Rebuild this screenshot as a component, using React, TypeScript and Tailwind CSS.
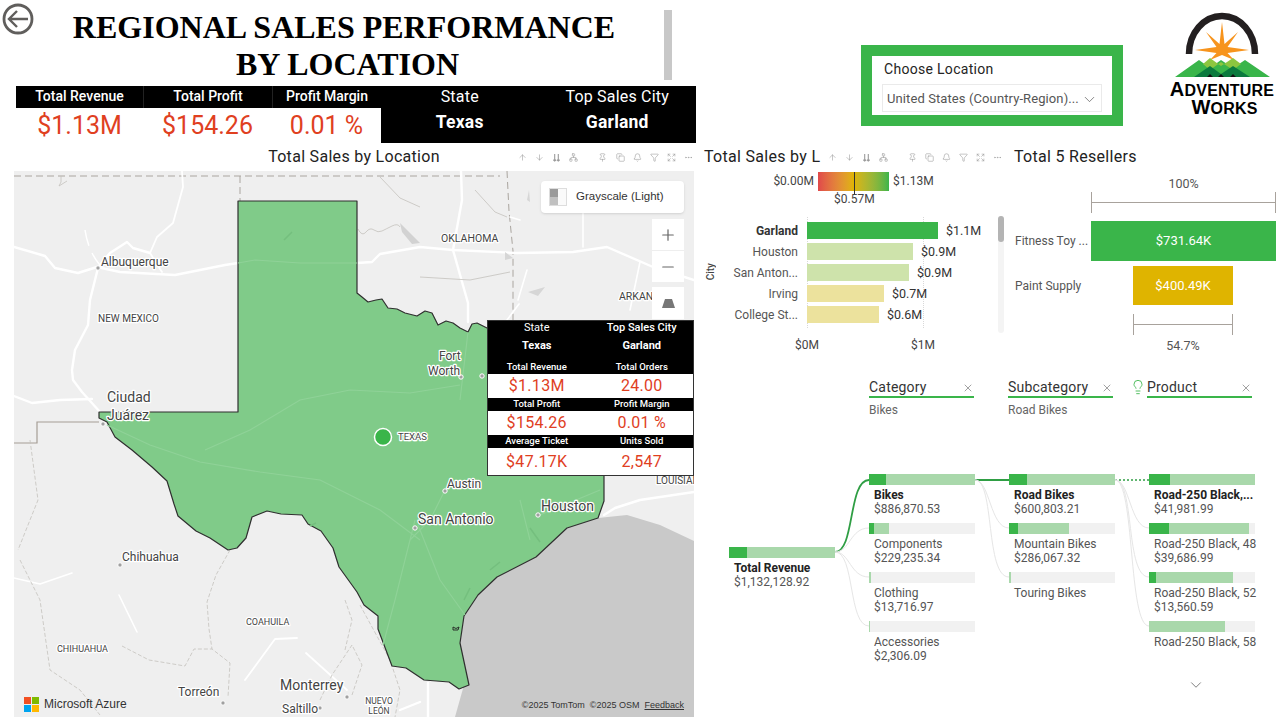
import React from "react";
import { ArrowUp, ArrowDown, ChevronDown, Pin, Copy, Bell, Filter, Expand, MoreHorizontal, Plus, Minus, X, Lightbulb, Network } from "lucide-react";

const din = "font-['Roboto','Noto_Sans',sans-serif]";

function Toolbar({ className }: { className: string }) {
  const c = "w-[9px] h-[9px] text-[#9a9a9a]";
  return (
    <div className={"flex items-center justify-between " + className}>
      <ArrowUp className={c} strokeWidth={1.5} />
      <ArrowDown className={c} strokeWidth={1.5} />
      <svg viewBox="0 0 10 10" className={c} fill="none" stroke="currentColor" strokeWidth="1.2"><path d="M3 1v8M1.5 7.5 3 9l1.5-1.5M7 1v8M5.5 7.5 7 9l1.5-1.5" /></svg>
      <Network className={c} strokeWidth={1.5} />
      <span className="w-[4px]" />
      <Pin className={c} strokeWidth={1.5} />
      <Copy className={c} strokeWidth={1.5} />
      <Bell className={c} strokeWidth={1.5} />
      <Filter className={c} strokeWidth={1.5} />
      <Expand className={c} strokeWidth={1.5} />
      <MoreHorizontal className={c} strokeWidth={1.5} />
    </div>
  );
}

const texas =
  "238,201 357,201 357,293 362,297 368,302 376,300 382,299 388,308 397,309 405,313 417,316 425,311 432,313 438,325 446,321 453,323 460,328 468,332 472,324 477,323 487,328 520,335 560,340 590,347 603,358 604,400 604,477 604,501 598,518 567,528 536,557 497,577 478,595 464,616 460,643 469,685 459,689 449,682 424,680 406,668 392,666 378,629 378,616 364,605 357,592 339,567 333,548 321,531 308,524 302,515 281,514 267,511 252,517 246,538 237,548 228,550 210,538 196,531 178,516 174,504 167,481 152,467 132,450 115,437 107,422 99,418 99,412 238,412";

const gulf = "455,717 464,685 460,643 464,616 478,595 497,577 536,557 567,528 598,518 627,515 660,525 694,541 694,717";

function Label({ x, y, t, s, a = "start", w = 400 }: { x: number; y: number; t: string; s: number; a?: "start" | "middle"; w?: number }) {
  return (
    <text x={x} y={y} fontSize={s} textAnchor={a} fontWeight={w} fill="#444" stroke="#fff" strokeWidth="2.5" strokeLinejoin="round" className="[paint-order:stroke] font-['Roboto',sans-serif]">
      {t}
    </text>
  );
}

function Dot({ x, y }: { x: number; y: number }) {
  return <circle cx={x} cy={y} r="2.2" fill="#a0a0a0" stroke="#fff" strokeWidth="1" />;
}

function MapArt() {
  const road = { fill: "none", stroke: "#fff", strokeWidth: 2.4, strokeLinejoin: "round" as const, strokeLinecap: "round" as const };
  const thin = { fill: "none", stroke: "#c4c1bd", strokeWidth: 0.8 };
  const dash = { fill: "none", stroke: "#aaa59f", strokeWidth: 1, strokeDasharray: "7 4" };
  return (
    <svg viewBox="14 171 680 546" className="w-full h-full block">
      <rect x="14" y="171" width="680" height="546" fill="#efefef" />
      <polygon points={gulf} fill="#c9c9c9" />
      <path d="M14 176H500" {...dash} />
      <path d="M240 176V201" {...dash} />
      <path d="M61 176v6l-2 4 8-5" {...thin} />
      <path d="M507 171l2 40 4 40v70" {...dash} />
      <path d="M14 443H37V422H99" fill="none" stroke="#a59d95" strokeWidth="1.2" />
      <path d="M14 247 45 256 55 268 78 273 97 267 120 272 175 275 225 265 238 263" {...road} />
      <path d="M357 263 372 262 380 254 420 247 453 250 517 253 573 252 607 247 653 267 694 280" {...road} />
      <path d="M461 171 462 200 453 250 468 303 468 322" {...road} />
      <path d="M98 268 90 300 88 325 75 350 72 370 73 380 82 392 100 412" {...road} />
      <path d="M182 171 183 187 173 223 157 237 150 253 162 272" {...road} strokeWidth={1.8} />
      <path d="M98 267 110 253 127 242 133 248 150 253" {...road} />
      <path d="M14 396 32 403 60 400 92 399" {...road} />
      <path d="M85 230q3 20 14 34" fill="none" stroke="#fff" strokeWidth="1.5" strokeDasharray="16 8" />
      <path d="M583 213V247M510 217 520 220M527 270 518 300M507 320l12-16" {...road} strokeWidth={1.6} />
      <path d="M640 262 630 310" {...road} strokeWidth={1.6} />
      <path d="M604 515 615 508 640 500 694 492" {...road} />
      <path d="M14 578 40 584 72 573" {...road} strokeWidth={1.6} />
      <path d="M119 595 137 632" {...road} strokeWidth={1.6} />
      <path d="M245 680 275 639 297 638" {...road} strokeWidth={1.8} />
      <path d="M306 653 347 690" {...road} strokeWidth={1.8} />
      <path d="M428 683V717" {...road} />
      <path d="M400 710l20-8" {...road} />
      <path d="M230 550 216 575 207 602 209 629 212 649 230 663 228 697" {...thin} strokeDasharray="4 2" />
      <path d="M122 646 149 660 185 666 194 649 212 649" {...thin} strokeDasharray="4 2" />
      <path d="M20 560 40 600 50 670 80 690 100 715M30 440l8 60 -20 50" {...thin} strokeDasharray="4 2" />
      <path d="M345 650 352 620 345 600M320 700l12-25 20-30 10 20-10 30" {...thin} strokeDasharray="4 2" />
      <path d="M360 605 390 660 400 690 395 717" {...thin} strokeDasharray="4 2" />
      <path d="M380 177 400 198 420 207M475 190l20 22 12 5M358 229q4 8 8 3t8-2 8 1 10-5 8 1M420 277 470 280 510 272" {...thin} />
      <path d="M400 223 420 243 412 244 402 232z" fill="#d2d2d2" />
      <path d="M528 292 545 287 538 296z M505 252l8 6-8 2z M527 200l2-10 1 12z" fill="#d6d6d6" />
      <polygon points={texas} fill="#80cb89" stroke="#2f2f2f" strokeWidth="1.2" strokeLinejoin="round" />
      <path d="M238 263 255 260 300 263 357 263M205 450 250 430 300 400 350 390 410 393 460 385M107 425 150 445 200 462 260 472 320 480 380 510 420 540M415 520 395 600 383 645M418 525 440 580 465 615M445 490 430 520 410 540M540 515 600 490M520 500l10 40M460 400 468 332" fill="none" stroke="#8fd298" strokeWidth="1.1" />
      <path d="M284 240l8-8M490 570l10-8M470 588l-6 12M530 528l10 14M310 526l6-3" stroke="#74bf7e" strokeWidth="1.5" fill="none" />
      <path d="M453 627q3 3 6 0l-1 3-5 0z" fill="none" stroke="#222" strokeWidth="0.9" />
      <circle cx="383" cy="437" r="8.5" fill="#3ab54a" stroke="#fff" strokeWidth="1.5" />
      <Dot x={98} y={268} />
      <Dot x={103} y={424} />
      <Dot x={461} y={377} />
      <Dot x={482} y={376} />
      <Dot x={445} y={491} />
      <Dot x={415} y={528} />
      <Dot x={538} y={515} />
      <Dot x={120} y={565} />
      <Dot x={347} y={697} />
      <Dot x={223} y={703} />
      <Dot x={320} y={708} />
      <Label x={101} y={266} t="Albuquerque" s={12} />
      <Label x={98} y={322} t="NEW MEXICO" s={10} />
      <Label x={107} y={402} t="Ciudad" s={14} />
      <Label x={107} y={420} t="Juárez" s={14} />
      <Label x={441} y={242} t="OKLAHOMA" s={10.5} />
      <Label x={619} y={300} t="ARKAN" s={10.5} />
      <Label x={439} y={360} t="Fort" s={12} />
      <Label x={428} y={375} t="Worth" s={12} />
      <Label x={398} y={440} t="TEXAS" s={9.5} />
      <Label x={447} y={488} t="Austin" s={12} />
      <Label x={418} y={524} t="San Antonio" s={14} />
      <Label x={541} y={511} t="Houston" s={14} />
      <Label x={122} y={561} t="Chihuahua" s={12} />
      <Label x={57} y={652} t="CHIHUAHUA" s={9} />
      <Label x={246} y={625} t="COAHUILA" s={9} />
      <Label x={178} y={696} t="Torreón" s={12} />
      <Label x={280} y={690} t="Monterrey" s={14} />
      <Label x={282} y={713} t="Saltillo" s={12} />
      <Label x={379} y={704} t="NUEVO" s={8.5} a="middle" />
      <Label x={379} y={714} t="LEÓN" s={8.5} a="middle" />
      <Label x={656} y={484} t="LOUISIANA" s={10} />
    </svg>
  );
}

function TipHead({ a, b }: { a: string; b: string }) {
  return (
    <div className="grid grid-cols-2 bg-black text-white text-[9.5px] font-medium h-[13px] leading-[11px] text-center">
      <div className="pr-[5px]">{a}</div>
      <div>{b}</div>
    </div>
  );
}
function TipVal({ a, b, h }: { a: string; b: string; h: string }) {
  return (
    <div className={"grid grid-cols-2 bg-white text-[#e0401f] text-[16px] text-center items-center tracking-[0.3px] " + h}>
      <div className="pr-[5px]">{a}</div>
      <div>{b}</div>
    </div>
  );
}

function Tooltip() {
  return (
    <div className={"absolute left-[473px] top-[149px] w-[207px] h-[156px] border border-[#333] bg-black flex flex-col " + din}>
      <div className="grid grid-cols-2 text-white text-center h-[40px] text-[11px]">
        <div className="pr-[5px]">
          <div className="leading-[13px]">State</div>
          <div className="font-bold leading-[13px] mt-[5px]">Texas</div>
        </div>
        <div>
          <div className="leading-[13px] font-medium">Top Sales City</div>
          <div className="font-bold leading-[13px] mt-[5px]">Garland</div>
        </div>
      </div>
      <TipHead a="Total Revenue" b="Total Orders" />
      <TipVal a="$1.13M" b="24.00" h="h-[24px]" />
      <TipHead a="Total Profit" b="Profit Margin" />
      <TipVal a="$154.26" b="0.01 %" h="h-[24px]" />
      <TipHead a="Average Ticket" b="Units Sold" />
      <TipVal a="$47.17K" b="2,547" h="h-[27px]" />
    </div>
  );
}

function MapControls() {
  return (
    <>
      <div className="absolute left-[527px] top-[10px] w-[143px] h-[32px] bg-white rounded-[4px] shadow-sm flex items-center pl-[8px] gap-[9px] font-['Liberation_Sans',sans-serif] text-[11.5px] text-[#333]">
        <div className="w-[18px] h-[18px] border border-[#ddd] grid grid-cols-2 grid-rows-2 gap-0 bg-[#fafafa]">
          <div className="bg-[#9a9a9a]" />
          <div />
          <div className="bg-[#c0c0c0]" />
          <div />
        </div>
        Grayscale (Light)
      </div>
      <div className="absolute left-[638px] top-[48px] w-[32px] flex flex-col text-[#666]">
        <div className="h-[32px] bg-white flex items-center justify-center border-b border-[#eee]"><Plus size={18} strokeWidth={1.6} /></div>
        <div className="h-[31px] bg-white flex items-center justify-center"><Minus size={18} strokeWidth={1.6} /></div>
        <div className="h-[32px] mt-[5px] bg-white flex items-center justify-center">
          <svg width="13" height="9" viewBox="0 0 13 9"><path d="M3 0h7l3 9H0z" fill="#777" /></svg>
        </div>
      </div>
      <div className="absolute left-[10px] bottom-[4px] flex items-center gap-[5px] text-[12px] text-[#333] font-['Liberation_Sans',sans-serif]">
        <svg width="15" height="15" viewBox="0 0 15 15">
          <rect width="7" height="7" fill="#f25022" />
          <rect x="8" width="7" height="7" fill="#7fba00" />
          <rect y="8" width="7" height="7" fill="#00a4ef" />
          <rect x="8" y="8" width="7" height="7" fill="#ffb900" />
        </svg>
        Microsoft Azure
      </div>
      <div className="absolute right-[10px] bottom-[5px] text-[9px] text-[#333] flex gap-[5px] font-['Liberation_Sans',sans-serif]">
        <span>©2025 TomTom</span>
        <span>©2025 OSM</span>
        <span className="underline">Feedback</span>
      </div>
    </>
  );
}

function Left() {
  return (
    <div className="w-[700px] shrink-0 flex flex-col">
      <div className="h-[86px] flex items-start">
        <svg width="32" height="32" viewBox="0 0 32 32" className="ml-[2px] mt-[3px] shrink-0" fill="none" stroke="#605e5c">
          <circle cx="16" cy="16" r="14" strokeWidth="2.8" />
          <path d="M26 16H7M15 8l-8 8 8 8" strokeWidth="2.4" />
        </svg>
        <div className="w-[626px] -ml-[1px] pt-[9px] text-center font-['Liberation_Serif',serif] font-bold text-[32px] leading-[37px] text-black">
          <div className="-ml-[4px]">REGIONAL SALES PERFORMANCE</div>
          <div className="ml-[3px]">BY LOCATION</div>
        </div>
        <div className="w-[8px] h-[70px] mt-[10px] ml-[5px] bg-[#c8c8c8]" />
      </div>
      <div className="ml-[16px] w-[680px] h-[57px] flex">
        <div className="w-[365px] flex flex-col">
          <div className="h-[23px] bg-black text-white grid grid-cols-[127px_129px_109px] text-[14px] leading-[20px] text-center font-medium">
            <div>Total Revenue</div>
            <div className="border-l border-[#222]">Total Profit</div>
            <div className="border-l border-[#222]">Profit Margin</div>
          </div>
          <div className="grid grid-cols-[127px_129px_109px] text-[#e0401f] text-[25px] leading-[35px] text-center">
            <div>$1.13M</div>
            <div>$154.26</div>
            <div>0.01 %</div>
          </div>
        </div>
        <div className="flex-1 bg-black text-white grid grid-cols-2 text-center text-[16px] tracking-[0.2px]">
          <div className="pt-[1px]">
            <div className="leading-[20px]">State</div>
            <div className="font-bold text-[17.5px] leading-[22px] mt-[4px]">Texas</div>
          </div>
          <div className="pt-[1px]">
            <div className="leading-[20px]">Top Sales City</div>
            <div className="font-bold text-[17.5px] leading-[22px] mt-[4px]">Garland</div>
          </div>
        </div>
      </div>
      <div className="h-[28px] flex items-center">
        <div className="w-[518px] pl-[190px] text-center text-[16px] leading-[26px] text-[#222] tracking-[0.3px]">Total Sales by Location</div>
        <Toolbar className="w-[175px]" />
      </div>
      <div className="relative ml-[14px] w-[680px] h-[546px] overflow-hidden">
        <MapArt />
        <MapControls />
        <Tooltip />
      </div>
    </div>
  );
}

function Logo() {
  return (
    <div className="flex flex-col items-center w-[112px] ml-[43px] mt-[12px]">
      <svg width="104" height="68" viewBox="0 0 104 68" className="shrink-0">
        <path d="M19 42A33 38 0 0 1 85 42" fill="none" stroke="#231f20" strokeWidth="6.5" />
        <path d="M52 10 54.5 32 68 20 57.5 35 79 38 57.5 41 64 48 52 43 40 48 46.5 41 25 38 46.5 35 36 20 49.5 32Z" fill="#f7941d" />
        <path d="M5 65 29 48 40 56 51 48 63 56 75 48 100 65Z" fill="#39b54a" />
        <path d="M33 52 40 46 51 54 63 46 71 52 63 58 51 50 40 58Z" fill="#8dc63f" />
        <path d="M24 65 40 54 51 62 63 54 80 65Z" fill="#0b7a3e" />
        <path d="M37 65l3-3 3 3zM48 65l3-3 3 3zM60 65l3-3 3 3z" fill="#111" />
      </svg>
      <div className="font-['Liberation_Sans',sans-serif] font-bold text-black text-center mt-[1px] tracking-[0.2px] whitespace-nowrap">
        <div className="text-[16px] leading-[17px]"><span className="text-[20px] leading-[17px]">A</span>DVENTURE</div>
        <div className="text-[16px] leading-[17px] ml-[5px]"><span className="text-[20px] leading-[17px]">W</span>ORKS</div>
      </div>
    </div>
  );
}

function Slicer() {
  return (
    <div className="ml-[161px] mt-[45px] w-[262px] h-[81px] border-[11px] border-[#3ab54a] bg-white shrink-0 px-[10px]">
      <div className="text-[14px] leading-[18px] mt-[4px] ml-[2px] text-[#252423] tracking-[0.3px]">Choose Location</div>
      <div className="h-[28px] mt-[6px] border border-[#eaeaea] flex items-center justify-between pl-[4px] pr-[3px] pt-[2px] text-[13px] text-[#555] tracking-[0.1px]">
        <span className="whitespace-nowrap">United States (Country-Region)...</span>
        <ChevronDown size={17} strokeWidth={1} className="shrink-0" />
      </div>
    </div>
  );
}

const bars = [
  { n: "Garland", v: "$1.1M", w: "w-[131px]", c: "bg-[#3ab54a]", b: "font-bold text-[#333]" },
  { n: "Houston", v: "$0.9M", w: "w-[106px]", c: "bg-[#cee3ab]", b: "" },
  { n: "San Anton...", v: "$0.9M", w: "w-[102px]", c: "bg-[#cee3ab]", b: "" },
  { n: "Irving", v: "$0.7M", w: "w-[77px]", c: "bg-[#ece29d]", b: "" },
  { n: "College St...", v: "$0.6M", w: "w-[72px]", c: "bg-[#ece29d]", b: "" },
];

function BarChart() {
  return (
    <div className="w-[310px] shrink-0 flex flex-col">
      <div className="h-[28px] flex items-center">
        <div className="w-[127px] pl-[4px] whitespace-nowrap text-[16px] leading-[26px] text-[#222] tracking-[0.3px]">Total Sales by L</div>
        <Toolbar className="w-[174px] ml-[1px]" />
      </div>
      <div className="h-[51px] text-[12px] text-[#444]">
        <div className="flex items-start h-[35px] mt-[1px] relative">
          <div className="w-[118px] text-right pr-[4px] leading-[19px]">$0.00M</div>
          <div className="relative w-[71px] h-[19px] bg-gradient-to-r from-[#e0484a] via-[#dfb400] to-[#3ab54a]">
            <div className="absolute left-[36px] top-0 h-[23px] w-px bg-[#333]" />
          </div>
          <div className="pl-[4px] leading-[19px]">$1.13M</div>
          <div className="absolute left-[134px] top-[20px] w-[40px] text-center leading-[14px] whitespace-nowrap">$0.57M</div>
        </div>
      </div>
      <div className="flex relative">
        <div className="absolute left-[107px] -top-[5px] h-[111px] border-l border-dotted border-[#d8d8d8]" />
        <div className="absolute left-[223px] -top-[5px] h-[111px] border-l border-dotted border-[#d8d8d8]" />
        <div className="w-[20px] flex items-start justify-center text-[10px] font-medium text-[#444] pt-[41px]">
          <span className="[writing-mode:vertical-rl] rotate-180">City</span>
        </div>
        <div className="w-[278px] flex flex-col gap-[4px] h-[101px] relative">
          {bars.map((b) => (
            <div key={b.n} className="flex items-center h-[17px] text-[12px] text-[#555]">
              <div className={"w-[78px] text-right whitespace-nowrap pt-[1px] " + b.b}>{b.n}</div>
              <div className={"ml-[9px] h-[17px] " + b.w + " " + b.c} />
              <div className="ml-[8px] text-[#333] text-[12.5px] pt-[1px]">{b.v}</div>
            </div>
          ))}
        </div>
        <div className="w-[6px] h-[117px] -mt-[6px] bg-[#f4f4f4] rounded-full">
          <div className="h-[26px] bg-[#b4b4b4] rounded-full" />
        </div>
      </div>
      <div className="flex text-[12px] text-[#444] mt-[4px] leading-[16px]">
        <div className="w-[40px] ml-[87px] text-center">$0M</div>
        <div className="w-[40px] ml-[76px] text-center">$1M</div>
      </div>
    </div>
  );
}

function Funnel() {
  return (
    <div className="flex-1 flex flex-col">
      <div className="h-[28px] flex items-center pl-[4px] text-[16px] leading-[26px] text-[#222] tracking-[0.3px]">Total 5 Resellers</div>
      <div className="ml-[81px] w-[185px] flex flex-col text-[12.5px] text-[#555]">
        <div className="text-center leading-[16px] mt-[5px]">100%</div>
        <div className="h-[21px] border-x border-[#a8a29c] flex items-center"><div className="w-full h-px bg-[#a8a29c]" /></div>
      </div>
      <div className="flex mt-[8px] items-center h-[40px] text-[12px] text-[#555]">
        <div className="w-[81px] pl-[5px] whitespace-nowrap">Fitness Toy ...</div>
        <div className="w-[185px] h-full bg-[#3ab54a] text-white flex items-center justify-center text-[13px]">$731.64K</div>
      </div>
      <div className="flex mt-[5px] items-center h-[39px] text-[12px] text-[#555]">
        <div className="w-[123px] pl-[5px] whitespace-nowrap pt-[1px]">Paint Supply</div>
        <div className="w-[100px] h-full bg-[#dfb400] text-white flex items-center justify-center text-[13px]">$400.49K</div>
      </div>
      <div className="ml-[123px] w-[100px] flex flex-col text-[12.5px] text-[#555]">
        <div className="h-[21px] mt-[9px] border-x border-[#a8a29c] flex items-center"><div className="w-full h-px bg-[#a8a29c]" /></div>
        <div className="text-center leading-[16px] mt-[3px]">54.7%</div>
      </div>
    </div>
  );
}

function Head({ t, s, bulb }: { t: string; s?: string; bulb?: boolean }) {
  return (
    <div className="w-[139px] shrink-0 relative">
      {bulb && <Lightbulb size={16} strokeWidth={1.3} className="absolute -left-[17px] top-[1px] text-[#3ab54a]" />}
      <div className="w-[105px] h-[20px] border-b-2 border-[#3ab54a] flex items-start justify-between">
        <span className="text-[14px] leading-[18px] text-[#333] tracking-[0.2px]">{t}</span>
        <X size={12} strokeWidth={1} className="mt-[4px] text-[#444]" />
      </div>
      {s && <div className="text-[12px] text-[#666] leading-[14px] mt-[5px]">{s}</div>}
    </div>
  );
}

function Node({ dark, light, n, v, bold }: { dark: string; light: string; n: string; v?: string; bold?: boolean }) {
  return (
    <div className="h-[49px] w-[106px] shrink-0">
      <div className="h-[11px] bg-[#f1f1f1] flex">
        <div className={"h-full bg-[#3ab54a] " + dark} />
        <div className={"h-full bg-[#a9d8ab] " + light} />
      </div>
      <div className={"ml-[5px] mt-[3px] text-[12px] leading-[14px] whitespace-nowrap " + (bold ? "font-bold text-[#222]" : "text-[#555]")}>{n}</div>
      {v && <div className="ml-[5px] text-[12px] leading-[14px] text-[#555] whitespace-nowrap">{v}</div>}
    </div>
  );
}

function Decomp() {
  return (
    <div className="flex flex-col">
      <div className="flex ml-[169px] mt-[8px] h-[96px]">
        <Head t="Category" s="Bikes" />
        <Head t="Subcategory" s="Road Bikes" />
        <Head t="Product" bulb />
      </div>
      <div className="relative flex h-[246px]">
        <svg viewBox="700 474 580 246" className="absolute inset-0 w-[580px] h-[246px]" fill="none">
          <path d="M835 552C855 552 848 480 869 480" stroke="#2f9e44" strokeWidth="1.8" />
          <path d="M835 552C850 552 850 528 869 528M835 552C850 552 850 577 869 577M835 552C855 552 848 626 869 626" stroke="#e6e6e6" />
          <path d="M975 480H1009" stroke="#2f9e44" strokeWidth="1.8" />
          <path d="M975 480C990 480 990 528 1009 528M975 480C995 480 985 577 1009 577" stroke="#e6e6e6" />
          <path d="M1115 480H1149" stroke="#2f9e44" strokeWidth="1.6" strokeDasharray="2 2" />
          <path d="M1115 480C1130 480 1130 528 1149 528M1115 480C1135 480 1125 577 1149 577M1115 480C1135 480 1128 626 1149 626" stroke="#e6e6e6" />
        </svg>
        <div className="ml-[29px] mt-[73px] relative">
          <Node dark="w-[18px]" light="w-[88px]" n="Total Revenue" v="$1,132,128.92" bold />
        </div>
        <div className="ml-[34px] flex flex-col relative">
          <Node dark="w-[17px]" light="w-[89px]" n="Bikes" v="$886,870.53" bold />
          <Node dark="w-[5px]" light="w-[15px]" n="Components" v="$229,235.34" />
          <Node dark="w-0" light="w-[2px]" n="Clothing" v="$13,716.97" />
          <Node dark="w-0" light="w-px" n="Accessories" v="$2,306.09" />
        </div>
        <div className="ml-[34px] flex flex-col relative">
          <Node dark="w-[18px]" light="w-[88px]" n="Road Bikes" v="$600,803.21" bold />
          <Node dark="w-[9px]" light="w-[51px]" n="Mountain Bikes" v="$286,067.32" />
          <Node dark="w-0" light="w-[2px]" n="Touring Bikes" />
        </div>
        <div className="ml-[34px] flex flex-col relative">
          <Node dark="w-[21px]" light="w-[85px]" n="Road-250 Black,..." v="$41,981.99" bold />
          <Node dark="w-[20px]" light="w-[80px]" n="Road-250 Black, 48" v="$39,686.99" />
          <Node dark="w-[7px]" light="w-[77px]" n="Road-250 Black, 52" v="$13,560.59" />
          <Node dark="w-0" light="w-[76px]" n="Road-250 Black, 58" />
          <ChevronDown size={18} strokeWidth={1} className="ml-[38px] mt-[6px] text-[#555]" />
        </div>
      </div>
    </div>
  );
}

export default function App() {
  return (
    <div className={"w-[1280px] h-[720px] overflow-hidden bg-white flex " + din}>
      <Left />
      <div className="flex-1 flex flex-col">
        <div className="h-[143px] flex items-start">
          <Slicer />
          <Logo />
        </div>
        <div className="flex h-[227px]">
          <BarChart />
          <Funnel />
        </div>
        <Decomp />
      </div>
    </div>
  );
}
